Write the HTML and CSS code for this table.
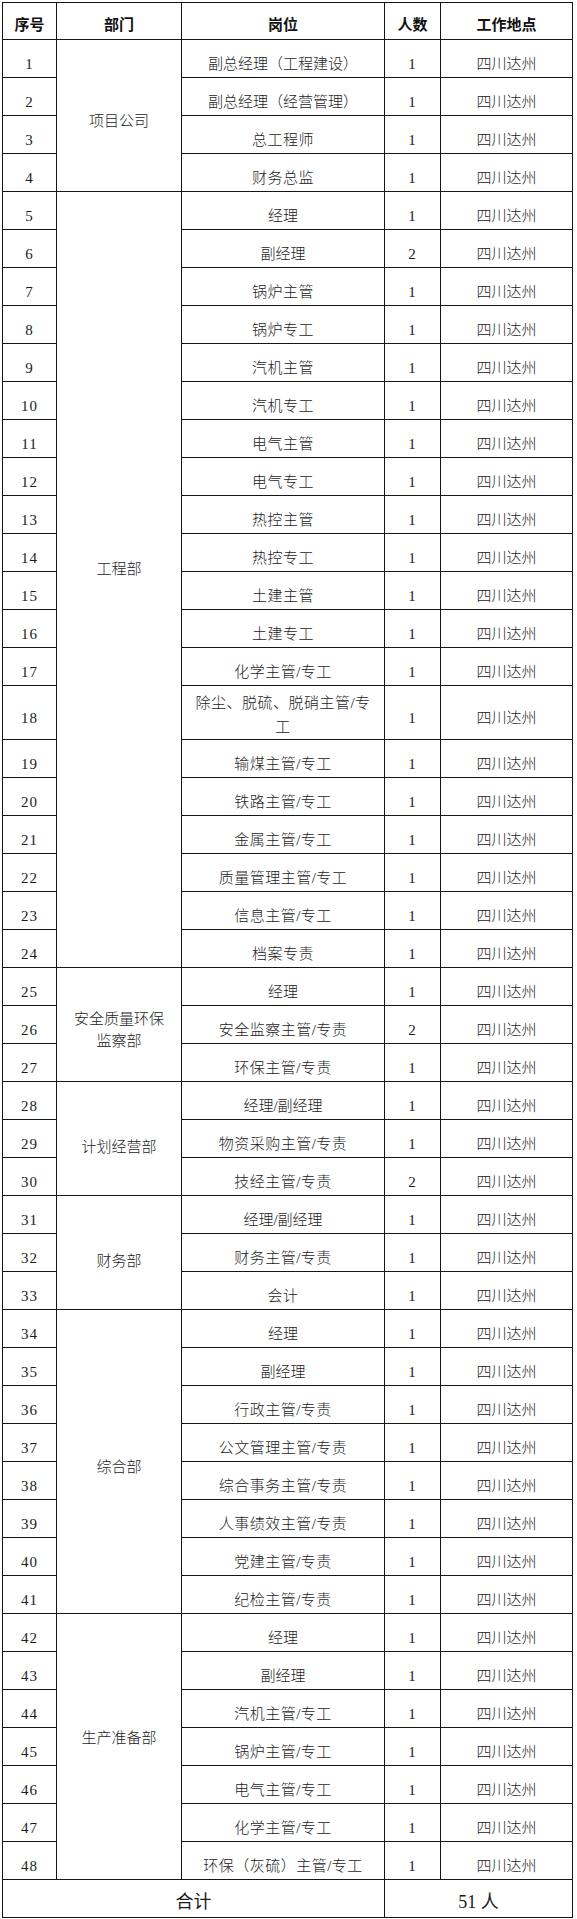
FILE: index.html
```html
<!DOCTYPE html>
<html lang="zh-CN">
<head>
<meta charset="utf-8">
<title>岗位表</title>
<link rel="stylesheet" href="styles.css">
</head>
<body>
<table class="jobs">
  <colgroup>
    <col class="c-no">
    <col class="c-dept">
    <col class="c-post">
    <col class="c-num">
    <col class="c-loc">
  </colgroup>
  <thead>
    <tr class="head">
      <th>序号</th><th>部门</th><th>岗位</th><th>人数</th><th>工作地点</th>
    </tr>
  </thead>
  <tbody>
    <tr><td class="no">1</td><td class="dept d-proj" rowspan="4">项目公司</td><td>副总经理（工程建设）</td><td class="no">1</td><td>四川达州</td></tr>
    <tr><td class="no">2</td><td>副总经理（经营管理）</td><td class="no">1</td><td>四川达州</td></tr>
    <tr><td class="no">3</td><td class="sp">总工程师</td><td class="no">1</td><td>四川达州</td></tr>
    <tr><td class="no">4</td><td class="sp">财务总监</td><td class="no">1</td><td>四川达州</td></tr>

    <tr><td class="no">5</td><td class="dept d-eng" rowspan="20">工程部</td><td>经理</td><td class="no">1</td><td>四川达州</td></tr>
    <tr><td class="no">6</td><td>副经理</td><td class="no">2</td><td>四川达州</td></tr>
    <tr><td class="no">7</td><td class="sp">锅炉主管</td><td class="no">1</td><td>四川达州</td></tr>
    <tr><td class="no">8</td><td class="sp">锅炉专工</td><td class="no">1</td><td>四川达州</td></tr>
    <tr><td class="no">9</td><td class="sp">汽机主管</td><td class="no">1</td><td>四川达州</td></tr>
    <tr><td class="no">10</td><td class="sp">汽机专工</td><td class="no">1</td><td>四川达州</td></tr>
    <tr><td class="no">11</td><td class="sp">电气主管</td><td class="no">1</td><td>四川达州</td></tr>
    <tr><td class="no">12</td><td class="sp">电气专工</td><td class="no">1</td><td>四川达州</td></tr>
    <tr><td class="no">13</td><td class="sp">热控主管</td><td class="no">1</td><td>四川达州</td></tr>
    <tr><td class="no">14</td><td class="sp">热控专工</td><td class="no">1</td><td>四川达州</td></tr>
    <tr><td class="no">15</td><td class="sp">土建主管</td><td class="no">1</td><td>四川达州</td></tr>
    <tr><td class="no">16</td><td class="sp">土建专工</td><td class="no">1</td><td>四川达州</td></tr>
    <tr><td class="no">17</td><td class="sp">化学主管/专工</td><td class="no">1</td><td>四川达州</td></tr>
    <tr class="tall"><td class="no">18</td><td class="sp wrap">除尘、脱硫、脱硝主管/专<br>工</td><td class="no">1</td><td>四川达州</td></tr>
    <tr><td class="no">19</td><td class="sp">输煤主管/专工</td><td class="no">1</td><td>四川达州</td></tr>
    <tr><td class="no">20</td><td class="sp">铁路主管/专工</td><td class="no">1</td><td>四川达州</td></tr>
    <tr><td class="no">21</td><td class="sp">金属主管/专工</td><td class="no">1</td><td>四川达州</td></tr>
    <tr><td class="no">22</td><td class="sp">质量管理主管/专工</td><td class="no">1</td><td>四川达州</td></tr>
    <tr><td class="no">23</td><td class="sp">信息主管/专工</td><td class="no">1</td><td>四川达州</td></tr>
    <tr><td class="no">24</td><td class="sp">档案专责</td><td class="no">1</td><td>四川达州</td></tr>

    <tr><td class="no">25</td><td class="dept" rowspan="3">安全质量环保<br>监察部</td><td>经理</td><td class="no">1</td><td>四川达州</td></tr>
    <tr><td class="no">26</td><td class="sp">安全监察主管/专责</td><td class="no">2</td><td>四川达州</td></tr>
    <tr><td class="no">27</td><td class="sp">环保主管/专责</td><td class="no">1</td><td>四川达州</td></tr>

    <tr><td class="no">28</td><td class="dept d-low" rowspan="3">计划经营部</td><td>经理/副经理</td><td class="no">1</td><td>四川达州</td></tr>
    <tr><td class="no">29</td><td class="sp">物资采购主管/专责</td><td class="no">1</td><td>四川达州</td></tr>
    <tr><td class="no">30</td><td class="sp">技经主管/专责</td><td class="no">2</td><td>四川达州</td></tr>

    <tr><td class="no">31</td><td class="dept d-low" rowspan="3">财务部</td><td>经理/副经理</td><td class="no">1</td><td>四川达州</td></tr>
    <tr><td class="no">32</td><td class="sp">财务主管/专责</td><td class="no">1</td><td>四川达州</td></tr>
    <tr><td class="no">33</td><td class="sp">会计</td><td class="no">1</td><td>四川达州</td></tr>

    <tr><td class="no">34</td><td class="dept" rowspan="8">综合部</td><td>经理</td><td class="no">1</td><td>四川达州</td></tr>
    <tr><td class="no">35</td><td>副经理</td><td class="no">1</td><td>四川达州</td></tr>
    <tr><td class="no">36</td><td class="sp">行政主管/专责</td><td class="no">1</td><td>四川达州</td></tr>
    <tr><td class="no">37</td><td class="sp">公文管理主管/专责</td><td class="no">1</td><td>四川达州</td></tr>
    <tr><td class="no">38</td><td class="sp">综合事务主管/专责</td><td class="no">1</td><td>四川达州</td></tr>
    <tr><td class="no">39</td><td class="sp">人事绩效主管/专责</td><td class="no">1</td><td>四川达州</td></tr>
    <tr><td class="no">40</td><td class="sp">党建主管/专责</td><td class="no">1</td><td>四川达州</td></tr>
    <tr><td class="no">41</td><td class="sp">纪检主管/专责</td><td class="no">1</td><td>四川达州</td></tr>

    <tr><td class="no">42</td><td class="dept d-prod" rowspan="7">生产准备部</td><td>经理</td><td class="no">1</td><td>四川达州</td></tr>
    <tr><td class="no">43</td><td>副经理</td><td class="no">1</td><td>四川达州</td></tr>
    <tr><td class="no">44</td><td class="sp">汽机主管/专工</td><td class="no">1</td><td>四川达州</td></tr>
    <tr><td class="no">45</td><td class="sp">锅炉主管/专工</td><td class="no">1</td><td>四川达州</td></tr>
    <tr><td class="no">46</td><td class="sp">电气主管/专工</td><td class="no">1</td><td>四川达州</td></tr>
    <tr><td class="no">47</td><td class="sp">化学主管/专工</td><td class="no">1</td><td>四川达州</td></tr>
    <tr><td class="no">48</td><td class="sp">环保（灰硫）主管/专工</td><td class="no">1</td><td>四川达州</td></tr>
  </tbody>
  <tfoot>
    <tr class="total">
      <td colspan="3">合计</td>
      <td colspan="2">51 人</td>
    </tr>
  </tfoot>
</table>
</body>
</html>
```

FILE: styles.css
```css
html, body {
  margin: 0;
  padding: 0;
  background: #ffffff;
}

body {
  padding: 2px 0 0 2px;
  font-family: "Liberation Serif", "Noto Sans CJK SC", serif;
  color: #1c1c1c;
}

.jobs {
  border-collapse: collapse;
  table-layout: fixed;
  width: 571px;
  font-size: 15px;
  font-weight: 300;
}

.c-no { width: 54px; }
.c-dept { width: 125px; }
.c-post { width: 203px; }
.c-num { width: 56px; }
.c-loc { width: 132px; }

.jobs th,
.jobs td {
  border: 1px solid #151515;
  text-align: center;
  vertical-align: middle;
  padding: 11px 0 0;
  line-height: 22px;
}

.jobs tbody tr {
  height: 38px;
}

.jobs tbody tr.tall {
  height: 54px;
}

.jobs td.wrap {
  padding-top: 4px;
  line-height: 24px;
}

.jobs .head {
  height: 37px;
}

.jobs th {
  font-family: "Liberation Serif", "Noto Sans CJK SC", serif;
  font-weight: 700;
  font-size: 15px;
  color: #111;
  padding-top: 8px;
}

.jobs td.no {
  letter-spacing: 1px;
}

.jobs td.sp {
  letter-spacing: 0.5px;
}

.jobs td.dept {
  padding-top: 11px;
}

.jobs td.d-eng {
  padding-top: 0;
  padding-bottom: 22px;
}

.jobs td.d-prod {
  padding-top: 0;
  padding-bottom: 18px;
}

.jobs td.d-low {
  padding-top: 16px;
}

.jobs .total {
  height: 38px;
}

.jobs .total td {
  font-size: 18px;
  font-weight: 400;
  padding-top: 7px;
}
```
